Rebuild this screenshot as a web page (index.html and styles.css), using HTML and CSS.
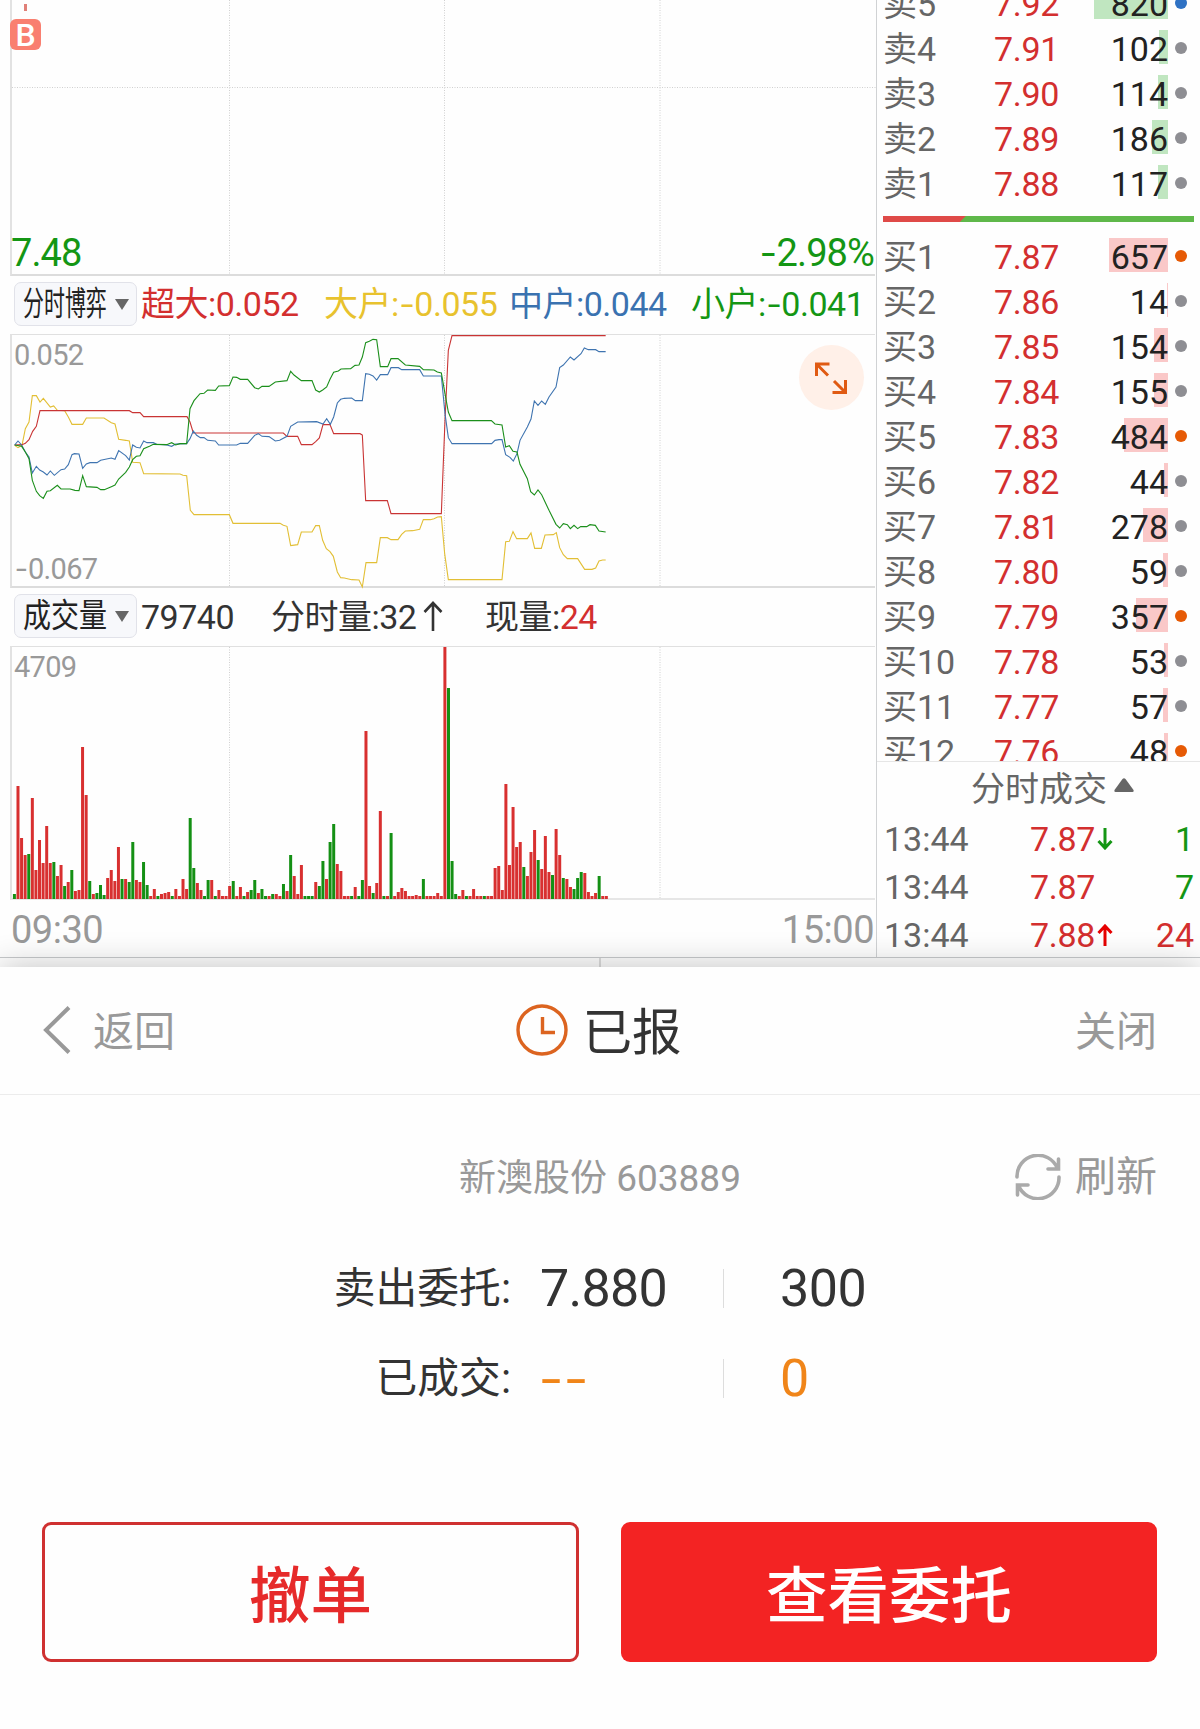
FILE: index.html
```html
<!DOCTYPE html>
<html lang="zh-CN">
<head>
    <meta charset="UTF-8">
    <meta name="viewport" content="width=device-width, initial-scale=1.0">
    <title>新澳股份 603889 - 委托</title>
    <link rel="stylesheet" href="styles.css">
</head>
<body>
    <div class="quote">
        <div class="charts">
            <div class="chart chart-price">
                <svg class="grid" width="864" height="274">
                    <path d="M0 87.5H864M217.5 0V274M432.5 0V274M648 0V274"/>
                </svg>
                <div class="mark-b">B</div>
                <div class="range">
                    <span>7.48</span>
                    <span><b class="minus">-</b>2.98%</span>
                </div>
            </div>

            <div class="legend">
                <div class="select"><span class="select-text narrow">分时博弈</span><i class="caret"></i></div>
                <span class="red lg-1">超大:0.052</span>
                <span class="yellow lg-2">大户:<b class="minus">-</b>0.055</span>
                <span class="blue lg-3">中户:0.044</span>
                <span class="green lg-4">小户:<b class="minus">-</b>0.041</span>
            </div>

            <div class="chart chart-game">
                <svg class="grid" width="864" height="252">
                    <path d="M217.5 0V252M432.5 0V252M648 0V252"/>
                </svg>
                <svg class="lines" width="864" height="253" viewBox="36 44 2592 759">
                    <polyline class="l-yellow" points="44,375 54,382 66,375 76,325 87,305 97,226 109,226 120,245 130,234 151,260 161,257 172,270 194,271 205,290 216,312 248,312 259,293 312,293 334,307 345,311 356,357 377,360 388,362 398,426 420,427 431,460 540,461 549,465 560,466 571,570 582,583 688,583 699,609 840,609 850,615 861,618 872,676 893,673 904,635 936,635 947,616 958,616 968,660 979,685 990,694 1000,708 1012,755 1022,772 1033,773 1055,778 1077,779 1087,800 1098,727 1130,727 1141,652 1162,652 1173,658 1194,658 1205,642 1216,632 1238,631 1259,627 1270,598 1291,598 1302,595 1313,590 1324,589 1334,700 1345,778 1506,778 1517,664 1528,663 1539,634 1550,655 1582,655 1593,638 1604,684 1624,684 1635,644 1660,643 1669,637 1679,682 1690,703 1702,715 1733,715 1754,747 1776,747 1787,743 1797,722 1808,719 1817,719"/>
                    <polyline class="l-red" points="44,374 66,373 76,369 87,358 98,333 109,318 120,271 388,271 398,277 420,277 431,289 561,289 570,305 580,338 850,338 861,348 893,348 904,373 936,373 947,364 958,353 969,313 990,313 1001,340 1080,340 1087,344 1097,541 1162,541 1173,580 1324,580 1335,300 1345,90 1356,46 1817,46"/>
                    <polyline class="l-blue" points="44,374 54,362 65,374 76,395 87,410 97,458 109,438 119,449 130,455 141,464 151,452 163,465 183,448 194,446 205,433 216,403 223,400 237,401 248,444 259,431 270,427 291,427 302,420 334,413 345,417 356,391 377,406 388,419 398,374 409,381 420,383 431,362 441,367 460,367 470,372 500,374 515,378 527,371 560,370 570,355 580,332 590,345 601,352 612,352 623,360 646,362 656,374 710,374 721,369 743,369 764,345 775,340 786,348 807,349 826,362 839,360 861,348 872,318 893,305 950,304 969,311 980,295 991,312 1001,290 1012,248 1022,237 1033,234 1055,233 1066,241 1087,241 1097,160 1108,162 1119,167 1130,179 1141,163 1163,163 1173,142 1195,142 1205,148 1259,148 1270,167 1324,167 1335,280 1345,352 1356,370 1475,370 1485,360 1497,358 1506,358 1517,403 1530,411 1540,422 1551,400 1560,360 1582,320 1593,296 1603,242 1614,255 1625,242 1636,252 1647,230 1668,200 1679,142 1690,134 1711,110 1722,119 1743,100 1753,83 1765,88 1787,88 1797,94 1817,94"/>
                    <polyline class="l-green" points="44,374 65,378 76,395 87,415 97,480 109,513 119,526 130,534 141,513 151,511 172,495 183,506 210,506 225,510 237,511 248,466 259,499 291,501 302,508 313,508 334,499 345,494 356,476 377,456 388,440 398,418 409,408 420,406 431,385 450,377 460,372 500,373 515,367 527,374 540,370 560,370 570,265 582,241 600,220 612,219 623,209 646,210 656,197 688,196 699,170 710,171 721,177 743,177 764,202 775,206 786,198 807,198 826,185 861,181 872,153 882,164 904,181 936,181 947,209 958,215 968,209 980,200 990,177 1001,156 1015,152 1023,146 1052,145 1065,135 1077,134 1087,110 1097,67 1108,63 1119,57 1130,58 1141,139 1163,139 1173,115 1194,115 1216,134 1259,138 1270,148 1302,149 1312,155 1324,158 1335,220 1345,275 1356,301 1474,301 1485,311 1506,314 1517,380 1528,376 1539,393 1551,395 1560,432 1582,475 1592,514 1603,524 1614,509 1625,523 1647,570 1668,612 1679,623 1690,610 1702,613 1711,625 1722,615 1733,625 1742,619 1760,619 1770,613 1786,615 1797,632 1817,635"/>
                </svg>
                <div class="limits">
                    <span>0.052</span>
                    <span><b class="minus">-</b>0.067</span>
                </div>
                <div class="expand">
                    <svg width="32" height="32" viewBox="0 0 32 32">
                        <path d="M1.5 14V2H14.5M2 2.5L13 13.5M30.5 18V30.5H17.5M30 30L19 19"/>
                    </svg>
                </div>
            </div>

            <div class="legend legend-volume">
                <div class="select"><span class="select-text mid">成交量</span><i class="caret"></i></div>
                <span class="lg-1">79740</span>
                <span class="lg-5">分时量:32<svg class="up" width="20" height="31" viewBox="0 0 20 31"><path d="M10 30V2M1.5 11L10 2L18.5 11"/></svg></span>
                <span class="lg-6">现量:<em class="red">24</em></span>
            </div>

            <div class="chart chart-volume">
                <svg class="grid" width="864" height="252">
                    <path d="M217.5 0V252M432.5 0V252M648 0V252"/>
                </svg>
                <svg class="bars" id="volume" width="864" height="252"></svg>
                <div class="limits">
                    <span>4709</span>
                </div>
            </div>

            <div class="axis">
                <span>09:30</span>
                <span>15:00</span>
            </div>
        </div>

        <div class="book">
            <div class="levels">
                <div class="level sell"><span class="name">卖5</span><span class="price">7.92</span><span class="qty"><i style="width:74px"></i><b>820</b></span><u class="dot dot-blue"></u></div>
                <div class="level sell"><span class="name">卖4</span><span class="price">7.91</span><span class="qty"><i style="width:9px"></i><b>102</b></span><u class="dot"></u></div>
                <div class="level sell"><span class="name">卖3</span><span class="price">7.90</span><span class="qty"><i style="width:10px"></i><b>114</b></span><u class="dot"></u></div>
                <div class="level sell"><span class="name">卖2</span><span class="price">7.89</span><span class="qty"><i style="width:16px"></i><b>186</b></span><u class="dot"></u></div>
                <div class="level sell"><span class="name">卖1</span><span class="price">7.88</span><span class="qty"><i style="width:10px"></i><b>117</b></span><u class="dot"></u></div>
                <div class="ratio"></div>
                <div class="level buy"><span class="name">买1</span><span class="price">7.87</span><span class="qty"><i style="width:59px"></i><b>657</b></span><u class="dot dot-orange"></u></div>
                <div class="level buy"><span class="name">买2</span><span class="price">7.86</span><span class="qty"><i style="width:1px"></i><b>14</b></span><u class="dot"></u></div>
                <div class="level buy"><span class="name">买3</span><span class="price">7.85</span><span class="qty"><i style="width:14px"></i><b>154</b></span><u class="dot"></u></div>
                <div class="level buy"><span class="name">买4</span><span class="price">7.84</span><span class="qty"><i style="width:14px"></i><b>155</b></span><u class="dot"></u></div>
                <div class="level buy"><span class="name">买5</span><span class="price">7.83</span><span class="qty"><i style="width:44px"></i><b>484</b></span><u class="dot dot-orange"></u></div>
                <div class="level buy"><span class="name">买6</span><span class="price">7.82</span><span class="qty"><i style="width:4px"></i><b>44</b></span><u class="dot"></u></div>
                <div class="level buy"><span class="name">买7</span><span class="price">7.81</span><span class="qty"><i style="width:25px"></i><b>278</b></span><u class="dot"></u></div>
                <div class="level buy"><span class="name">买8</span><span class="price">7.80</span><span class="qty"><i style="width:5px"></i><b>59</b></span><u class="dot"></u></div>
                <div class="level buy"><span class="name">买9</span><span class="price">7.79</span><span class="qty"><i style="width:32px"></i><b>357</b></span><u class="dot dot-orange"></u></div>
                <div class="level buy"><span class="name">买10</span><span class="price">7.78</span><span class="qty"><i style="width:4px"></i><b>53</b></span><u class="dot"></u></div>
                <div class="level buy"><span class="name">买11</span><span class="price">7.77</span><span class="qty"><i style="width:5px"></i><b>57</b></span><u class="dot"></u></div>
                <div class="level buy"><span class="name">买12</span><span class="price">7.76</span><span class="qty"><i style="width:4px"></i><b>48</b></span><u class="dot dot-orange"></u></div>
            </div>
            <div class="trades">
                <div class="trades-title">分时成交<svg width="20" height="14" viewBox="0 0 20 14"><path d="M8.5 1Q10 -0.5 11.5 1L19.5 12Q20 14 18.5 14H1.5Q0 14 0.5 12Z"/></svg></div>
                <div class="trade"><span class="time">13:44</span><span class="price">7.87</span><svg class="dir green" width="16" height="22" viewBox="0 0 16 22"><path d="M8 0V20M1.5 13L8 20L14.5 13"/></svg><span class="vol green">1</span></div>
                <div class="trade"><span class="time">13:44</span><span class="price">7.87</span><span class="vol green">7</span></div>
                <div class="trade"><span class="time">13:44</span><span class="price">7.88</span><svg class="dir bright" width="16" height="22" viewBox="0 0 16 22"><path d="M8 22V2M1.5 9L8 2L14.5 9"/></svg><span class="vol red">24</span></div>
            </div>
        </div>
    </div>
    <div class="tabs"></div>

    <div class="sheet">
        <div class="sheet-header">
            <div class="back">
                <svg width="28" height="48" viewBox="0 0 28 48"><path d="M26 1.5L3 24L26 46.5"/></svg>
                <span>返回</span>
            </div>
            <div class="status">
                <svg width="52" height="52" viewBox="0 0 52 52">
                    <circle cx="26" cy="26" r="24"/>
                    <path d="M26.5 13V28.5H39"/>
                </svg>
                <span>已报</span>
            </div>
            <div class="close"><span>关闭</span></div>
        </div>

        <div class="stock">
            <span class="stock-name">新澳股份 603889</span>
            <div class="refresh">
                <svg width="46" height="46" viewBox="0 0 46 46">
                    <path d="M2 23A21 21 0 0 1 42.5 14.5M43.5 5V15H33M44 23A21 21 0 0 1 3.5 31.5M2.5 41V31H13"/>
                </svg>
                <span>刷新</span>
            </div>
        </div>

        <div class="order">
            <span class="order-label">卖出委托:</span>
            <span class="order-price">7.880</span>
            <span class="order-qty">300</span>
        </div>
        <div class="order filled">
            <span class="order-label">已成交:</span>
            <span class="order-price dashes"><b>-</b><b>-</b></span>
            <span class="order-qty">0</span>
        </div>

        <div class="actions">
            <button class="btn btn-cancel">撤单</button>
            <button class="btn btn-view">查看委托</button>
        </div>
    </div>

    <script src="script.js"></script>
</body>
</html>
```

FILE: styles.css
```css
* {
    margin: 0;
    padding: 0;
    box-sizing: border-box;
}

body {
    width: 1200px;
    height: 1729px;
    overflow: hidden;
    background-color: #fefefe;
    color: #333;
    font-family: Roboto, "Noto Sans CJK SC", sans-serif;
    font-size: 34px;
}

b, em, u, i {
    font-weight: inherit;
    font-style: normal;
    text-decoration: none;
}

svg {
    display: block;
    fill: none;
}

.red { color: #d32f2f; }
.yellow { color: #e8c22e; }
.blue { color: #3a72b0; }
.green { color: #149614; }
.bright { color: #e60000; }

/* the font's hyphen is too short for a minus sign */
.minus {
    display: inline-block;
    transform: scaleX(1.35);
    width: 0.46em;
    text-align: center;
}

.quote {
    display: flex;
    height: 958px;
    border-bottom: 1px solid #c8cacc;
}

/* charts */
.charts {
    width: 877px;
    padding-left: 10px;
    border-right: 1px solid #d0d2d4;
}

.chart {
    position: relative;
    width: 865px;
    border-left: 2px solid #e2e2e2;
    border-bottom: 2px solid #dcdcdc;
}

.chart-price {
    height: 276px;
}

.chart-game,
.chart-volume {
    height: 254px;
    border-top: 1px solid #e0e0e0;
}

.chart-volume {
    border-bottom-color: #e6e6e6;
}

.grid,
.lines,
.bars {
    position: absolute;
    top: 0;
    left: 0;
}

.grid path {
    stroke: #d0d0d0;
    stroke-width: 1;
    stroke-dasharray: 1 1.5;
}

.lines {
    overflow: visible;
}

.lines polyline {
    stroke-width: 3.3;
}

.l-red { stroke: #c93434; }
.l-yellow { stroke: #e2bf35; }
.l-blue { stroke: #3f74b0; }
.l-green { stroke: #1b8f1b; }

.mark-b {
    position: absolute;
    left: -2px;
    top: 19px;
    width: 31px;
    height: 31px;
    border-radius: 6px;
    background-color: #f97f70;
    color: #fff;
    font-size: 32px;
    font-weight: 500;
    line-height: 32px;
    text-align: center;
}

.mark-b::before {
    content: "";
    position: absolute;
    left: 14px;
    top: -15px;
    width: 3px;
    height: 7px;
    background-color: #e08078;
}

.range {
    position: absolute;
    left: -1px;
    right: 1px;
    bottom: -2px;
    display: flex;
    justify-content: space-between;
    color: #149614;
    font-size: 38px;
    line-height: 46px;
    letter-spacing: -0.9px;
}

.limits {
    position: relative;
    display: flex;
    flex-direction: column;
    justify-content: space-between;
    height: 100%;
    padding: 3px 2px 0;
    color: #999;
    font-size: 29px;
    line-height: 34px;
    letter-spacing: -0.7px;
}

.limits .minus {
    width: 14px;
}

.legend {
    display: flex;
    align-items: flex-start;
    height: 58px;
    padding: 6px 0 0 4px;
    line-height: 44px;
    white-space: nowrap;
}

.legend > span {
    display: block;
    letter-spacing: -0.5px;
}

.select {
    display: flex;
    align-items: center;
    flex: none;
    width: 123px;
    height: 44px;
    padding-left: 8px;
    border: 1px solid #e1e2e9;
    border-radius: 7px;
    background-color: #f7f8fb;
}

.select-text {
    flex: none;
    width: 84px;
    margin-right: 8px;
    color: #222;
    font-size: 33px;
    line-height: 40px;
    transform-origin: 0 50%;
}

.narrow { transform: scaleX(0.635); }
.mid { transform: scaleX(0.85); }

.caret {
    flex: none;
    border: 7px solid transparent;
    border-top: 11px solid #666;
    border-bottom: 0;
}

.lg-1 { width: 187px; padding-left: 4px; }
.lg-2 { width: 185px; }
.lg-3 { width: 182px; }

.legend-volume > span { line-height: 46px; }
.legend-volume .lg-1 { width: 134px; }
.lg-5 { width: 214px; }
.legend .lg-5 { display: flex; }

.up {
    margin: 7px 0 0 7px;
    stroke: #333;
    stroke-width: 2.6;
}

.expand {
    position: absolute;
    left: 787px;
    top: 10px;
    display: flex;
    align-items: center;
    justify-content: center;
    width: 65px;
    height: 65px;
    border-radius: 50%;
    background-color: #fff0e8;
}

.expand svg {
    margin-right: 1px;
    stroke: #e05a12;
    stroke-width: 3;
}

.axis {
    display: flex;
    justify-content: space-between;
    width: 865px;
    padding: 8px 1px 0 1px;
    color: #999;
    font-size: 38px;
    line-height: 44px;
    letter-spacing: -0.5px;
}

/* order book */
.book {
    flex: 1;
}

.levels {
    height: 761px;
    overflow: hidden;
}

.level {
    display: flex;
    height: 45px;
    padding-left: 6px;
    line-height: 49px;
}

.level:first-child {
    margin-top: -20px;
}

.name {
    width: 111px;
    color: #666;
}

.price {
    width: 81px;
    color: #d32f2f;
    letter-spacing: -0.3px;
}

.qty {
    position: relative;
    width: 93px;
    color: #222;
    text-align: right;
}

.qty i {
    position: absolute;
    right: 0;
    top: 5px;
    height: 34px;
}

.qty b {
    position: relative;
}

.sell i { background-color: #c0e6c0; }
.buy i { background-color: #fac8c8; }

.dot {
    width: 12px;
    height: 12px;
    margin: 17px 0 0 7px;
    border-radius: 50%;
    background-color: #8e8e93;
}

.dot-blue { background-color: #2f72c4; }
.dot-orange { background-color: #e65a05; }

.ratio {
    height: 6px;
    margin: 11px 6px 11px 6px;
    background: linear-gradient(135deg, #df4a48 58px, #5fb84a 59px);
}

.trades {
    border-top: 1px solid #e6e6e6;
}

.trades-title {
    display: flex;
    height: 53px;
    padding-left: 94px;
    color: #666;
    line-height: 55px;
}

.trades-title svg {
    margin: 16px 0 0 7px;
    fill: #666;
}

.trade {
    display: flex;
    height: 48px;
    padding: 0 6px 0 7px;
    line-height: 48px;
}

.trade .time {
    width: 146px;
    color: #666;
}

.trade .price {
    width: 67px;
}

.dir {
    margin-top: 13px;
    stroke: currentColor;
    stroke-width: 3;
}

.vol {
    margin-left: auto;
}

/* strip of the bottom tabs that stays visible */
.tabs {
    width: 601px;
    height: 9px;
    border-right: 2px solid #ddd;
}

/* order sheet */
.sheet {
    position: relative;
    height: 762px;
    background-color: #fefefe;
    box-shadow: 0 0 32px rgba(0, 0, 0, 0.24);
}

.sheet-header {
    display: flex;
    align-items: center;
    justify-content: space-between;
    height: 128px;
    padding: 0 43px 2px 43px;
    border-bottom: 1px solid #ececec;
    color: #999;
    font-size: 41px;
}

.sheet-header span {
    display: block;
    margin-top: -3px;
}

.back {
    display: flex;
    align-items: center;
    gap: 22px;
    width: 300px;
}

.back svg {
    stroke: #999;
    stroke-width: 4;
}

.status {
    display: flex;
    align-items: center;
    gap: 15px;
    margin-right: 3px;
    color: #333;
    font-size: 49.5px;
}

.status svg {
    stroke: #dc6420;
    stroke-width: 3.4;
}

.close {
    width: 300px;
    text-align: right;
}

.stock {
    position: relative;
    display: flex;
    justify-content: center;
    height: 149px;
    padding-top: 59px;
    color: #999;
    font-size: 37px;
    line-height: 50px;
}

.refresh {
    position: absolute;
    right: 43px;
    top: 57px;
    display: flex;
    align-items: center;
    gap: 14px;
    font-size: 41px;
}

.refresh svg {
    stroke: #aaa;
    stroke-width: 3.6;
    stroke-linecap: round;
}

.order {
    display: flex;
    height: 90px;
    line-height: 90px;
}

.order-label {
    width: 511px;
    font-size: 41.8px;
    text-align: right;
}

.order-price {
    position: relative;
    width: 213px;
    padding-left: 29px;
    font-size: 52px;
    letter-spacing: -0.7px;
}

/* thin divider between price and quantity */
.order-price::after {
    content: "";
    position: absolute;
    right: 0;
    top: 25px;
    width: 1px;
    height: 39px;
    background-color: #ddd;
}

.order-qty {
    padding-left: 56px;
    font-size: 52px;
    letter-spacing: -0.5px;
}

.filled .order-price,
.filled .order-qty {
    color: #f08519;
}

.dashes b {
    display: inline-block;
    width: 25px;
    transform: translate(1px, 1px) scaleX(1.4);
    transform-origin: 0 50%;
}

.actions {
    display: flex;
    gap: 42px;
    padding: 98px 43px 0 42px;
}

.btn {
    width: 536px;
    height: 140px;
    padding-bottom: 2px;
    border-radius: 9px;
    font-family: inherit;
    font-size: 61.5px;
    font-weight: 500;
}

.btn-cancel {
    width: 537px;
    border: 3px solid #cf3030;
    background-color: #fefefe;
    color: #e62a2a;
}

.btn-view {
    border: none;
    background-color: #f32323;
    color: #fff;
}
```

FILE: script.js
```javascript
// one entry per minute: direction + bar height
const volumes = `g5 r113 r61 r44 g45 r101 r29 r59 r36 r73 r36 g37 r23 r34 g13 r17 g29 r8 r9 r152
r104 g18 r5 g6 g14 g4 r21 r29 r18 r52 g20 r20 g17 g57 r19 r17 g37 g14 r3 r10
g3 r5 r6 r7 g3 r10 r3 r20 r10 g81 g31 r16 r9 g3 g19 r19 g3 r9 r3 r3
r13 g18 r3 r12 g3 r7 g9 g19 r6 g10 g3 r3 g5 r5 r3 g15 r8 g44 r23 r5
r34 g3 g3 g3 r17 g13 g38 r20 g57 g75 r35 r28 r3 r3 g3 r12 g3 g19 r168 r13
g6 r16 r88 g3 r3 g66 r3 r7 r11 r8 r3 r3 r4 r3 g20 r3 r3 r3 r6 r3
r252 g211 g38 g5 r3 r9 g3 r3 r10 r3 r3 g3 r3 r3 r31 r33 r9 r115 r34 r92
r52 r57 g32 r23 r47 r69 g39 r30 r63 r27 g24 r70 r44 g21 r20 r12 g10 g21 g27 r26
r7 r3 r6 g23 r3 r3`.split(/\s+/);

const STEP = 3.5875;
const HEIGHT = 252;
const svg = document.getElementById('volume');

volumes.forEach((item, i) => {
    const h = Number(item.slice(1));
    const rect = document.createElementNS('http://www.w3.org/2000/svg', 'rect');
    rect.setAttribute('x', (0.9 + i * STEP).toFixed(2));
    rect.setAttribute('y', HEIGHT - h);
    rect.setAttribute('width', 3);
    rect.setAttribute('height', h);
    rect.setAttribute('fill', item[0] === 'r' ? '#d83030' : '#149014');
    svg.appendChild(rect);
});
```
